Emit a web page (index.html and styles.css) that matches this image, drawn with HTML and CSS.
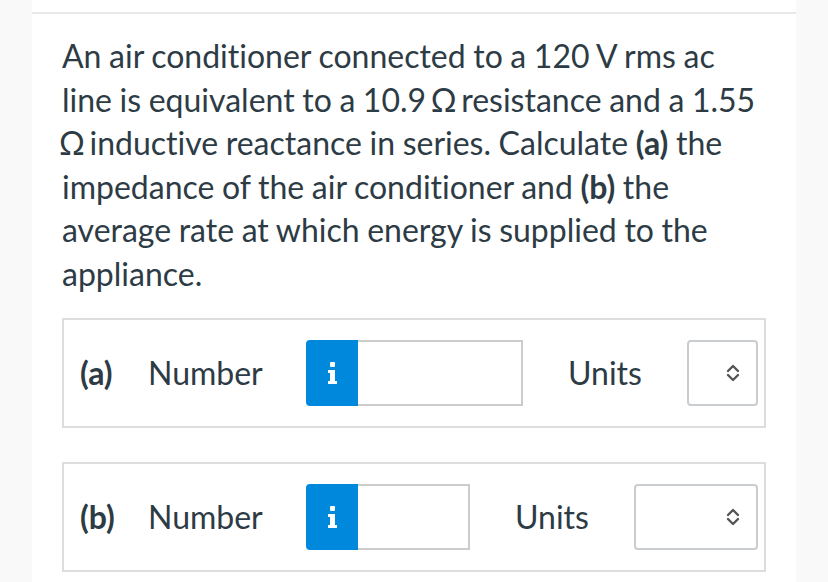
FILE: index.html
```html
<!DOCTYPE html>
<html>
<head>
<meta charset="utf-8">
<link rel="stylesheet" href="styles.css">
</head>
<body>
<div class="page">
  <div class="content">
    <p class="question">An air conditioner connected to a 120 V rms ac line is equivalent to a 10.9 <span class="ohm">Ω</span> resistance and a 1.55 <span class="ohm">Ω</span> inductive reactance in series. Calculate <b>(a)</b> the impedance of the air conditioner and <b>(b)</b> the average rate at which energy is supplied to the appliance.</p>

    <div class="part">
      <span class="part-label">(a)</span>
      <span class="num-label">Number</span>
      <span class="info-btn"><svg width="11" height="22" viewBox="0 0 11 22"><rect x="3" y="0" width="5" height="5" rx="1" fill="#fff"/><path d="M1 8H8V19H10V22H1V19H3V11H1Z" fill="#fff"/></svg></span>
      <span class="num-input wide"></span>
      <span class="units-label">Units</span>
      <span class="units-select narrow"><svg class="chev" width="14" height="20" viewBox="0 0 14 20"><path d="M2 8L7 3L12 8M2 12L7 17L12 12" fill="none" stroke="#555" stroke-width="2.4" stroke-linecap="round" stroke-linejoin="round"/></svg></span>
    </div>

    <div class="part">
      <span class="part-label">(b)</span>
      <span class="num-label">Number</span>
      <span class="info-btn"><svg width="11" height="22" viewBox="0 0 11 22"><rect x="3" y="0" width="5" height="5" rx="1" fill="#fff"/><path d="M1 8H8V19H10V22H1V19H3V11H1Z" fill="#fff"/></svg></span>
      <span class="num-input short"></span>
      <span class="units-label">Units</span>
      <span class="units-select wide-sel"><svg class="chev" width="14" height="20" viewBox="0 0 14 20"><path d="M2 8L7 3L12 8M2 12L7 17L12 12" fill="none" stroke="#555" stroke-width="2.4" stroke-linecap="round" stroke-linejoin="round"/></svg></span>
    </div>
  </div>
</div>
</body>
</html>
```

FILE: styles.css
```css
html, body {
  margin: 0;
  padding: 0;
  background: #f9f9f9;
}
body {
  font-family: Lato, "Open Sans", sans-serif;
  color: #2d3b45;
  font-variant-ligatures: none;
}
.page {
  margin: 0 32px;
  width: 764px;
  height: 582px;
  background: #fff;
  padding-top: 12px;
  box-sizing: border-box;
}
.content {
  border-top: 2px solid #e8e8e8;
  padding: 0 30px;
}
.question {
  margin: 20px 0 22px;
  font-size: 32px;
  line-height: 43.6px;
  word-spacing: -0.6px;
}
.question b {
  font-weight: 700;
}
.ohm {
  margin: 0 -3px;
}
.part {
  display: flex;
  align-items: center;
  border: 2px solid #dddddd;
  padding: 20px 6px 20px 16px;
  margin-bottom: 34px;
  font-size: 32px;
}
.part-label {
  font-weight: 700;
  width: 68px;
  flex: none;
}
.num-label {
  width: 158px;
  flex: none;
}
.info-btn {
  flex: none;
  width: 52px;
  height: 66px;
  background: #0088dd;
  border-radius: 4px 0 0 4px;
  display: flex;
  align-items: center;
  justify-content: center;
}
.num-input {
  flex: none;
  height: 66px;
  box-sizing: border-box;
  border: 2px solid #cccccc;
  border-left: none;
}
.num-input.wide { width: 165px; }
.num-input.short { width: 112px; }
.units-label {
  flex: 1;
  text-align: center;
}
.units-select {
  flex: none;
  height: 66px;
  box-sizing: border-box;
  border: 2px solid #c9cdd0;
  border-radius: 4px;
  display: flex;
  align-items: center;
  justify-content: flex-end;
  padding-right: 16px;
}
.units-select.narrow { width: 71px; }
.units-select.wide-sel { width: 124px; }
```
